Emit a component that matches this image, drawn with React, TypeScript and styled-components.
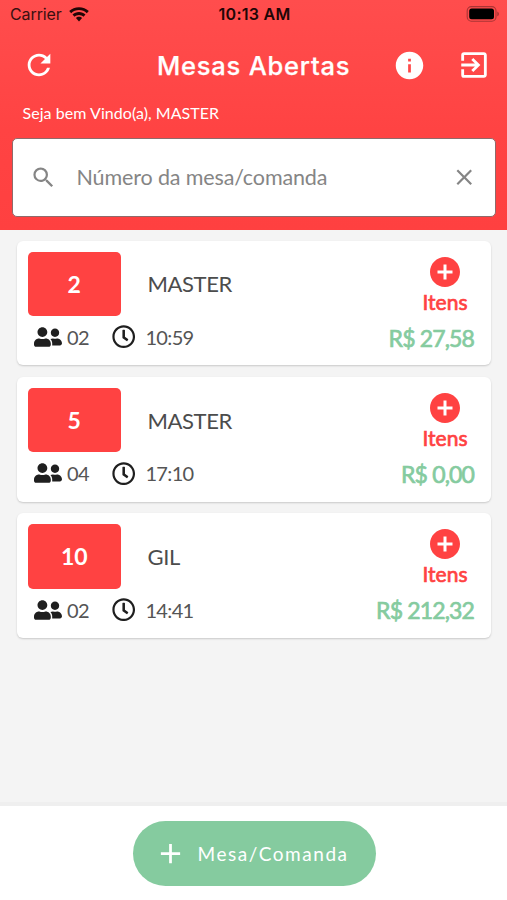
import React from "react";
import styled, { createGlobalStyle } from "styled-components";
import {
  MdRefresh,
  MdExitToApp,
  MdSearch,
  MdClose,
  MdAdd,
  MdAddCircle,
  MdInfo,
} from "react-icons/md";
import { FaUserFriends, FaRegClock } from "react-icons/fa";

const RED = "#ff4242";
const GREEN = "#85cb9f";

const GlobalStyle = createGlobalStyle`
  * { box-sizing: border-box; }
  body { margin: 0; background: #f4f4f4; }
  svg { display: block; flex: none; }
  button { border: 0; padding: 0; background: none; color: inherit; font: inherit; }
`;

const Screen = styled.div`
  width: 507px;
  height: 900px;
  display: flex;
  flex-direction: column;
  overflow: hidden;
  background: #f4f4f4;
  font-family: Lato, sans-serif;
  color: #4c4c4c;
  white-space: nowrap;
`;

const Header = styled.header`
  height: 230px;
  flex: none;
  background: linear-gradient(#ff4d4d 0, #ff4a4a 40px, #ff4343 130px, #ff4040 230px);
  color: #fff;
`;

const StatusBar = styled.div`
  height: 29px;
  padding: 0 8px 0 10px;
  display: grid;
  grid-template-columns: 1fr auto 1fr;
  align-items: center;
  font: 500 16px/29px Inter, sans-serif;
  color: #3a1010;
`;

const Carrier = styled.div`
  display: flex;
  align-items: center;
  gap: 7px;
  font-weight: 400;
  letter-spacing: -0.1px;
`;

const Clock = styled.div`
  font-weight: 600;
  letter-spacing: 0.25px;
  color: #200606;
`;

const BatterySlot = styled.div`
  justify-self: end;
  margin-top: -2px;
`;

const NavBar = styled.div`
  height: 72px;
  padding: 0 16px 0 22px;
  display: grid;
  grid-template-columns: 34px 1fr 34px 34px;
  align-items: center;
`;

const Title = styled.h1`
  margin: 1px 0 0 101px;
  font: 500 25.5px/32px Inter, sans-serif;
  letter-spacing: 0.78px;
  -webkit-text-stroke: 0.25px currentColor;
`;

const NavActions = styled.div`
  grid-column: 3 / 5;
  display: flex;
  align-items: center;
  gap: 31px;
  justify-content: flex-end;
  justify-self: end;
`;

const Welcome = styled.div`
  height: 24px;
  padding-left: 22.5px;
  font-size: 16px;
  line-height: 24px;
  letter-spacing: 0.05px;
`;

const SearchBox = styled.div`
  height: 79px;
  margin: 13px 11px 0 12px;
  padding: 0 18px 0 17px;
  display: flex;
  align-items: center;
  border: 1.5px solid #8f6a6a;
  border-radius: 5px;
  background: #fff;
  color: #858585;
`;

const Placeholder = styled.span`
  flex: 1;
  margin: -1px 0 0 19.5px;
  font-size: 21.5px;
  letter-spacing: -0.13px;
`;

const List = styled.main`
  flex: 1;
  padding: 10.5px 16px 0 17px;
  display: flex;
  flex-direction: column;
  gap: 11.5px;
`;

const Card = styled.article`
  height: 124.8px;
  flex: none;
  padding: 11px 17px 0 11px;
  border-radius: 6px;
  background: #fff;
  box-shadow: 0 1px 2px rgba(0, 0, 0, 0.18);
  display: flex;
  justify-content: space-between;
`;

const CardMain = styled.div`
  display: flex;
  flex-direction: column;
`;

const TableRow = styled.div`
  display: flex;
  align-items: center;
  gap: 27px;
`;

const TableNumber = styled.div`
  width: 92.5px;
  height: 64.5px;
  border-radius: 5px;
  background: ${RED};
  color: #fff;
  font-size: 23px;
  font-weight: 700;
  line-height: 65px;
  text-align: center;
`;

const Owner = styled.div`
  font-size: 22px;
  line-height: 30px;
  padding-top: 1px;
  letter-spacing: -0.4px;
`;

const Meta = styled.div`
  height: 42px;
  padding-left: 6px;
  display: flex;
  align-items: center;
  font-size: 20px;
  letter-spacing: -0.65px;
  color: #1f1f1f;
`;

const MetaText = styled.span<{ $width?: number }>`
  width: ${(p) => (p.$width ? `${p.$width}px` : "auto")};
  margin-left: ${(p) => (p.$width ? 5 : 10)}px;
  color: #555;
`;

const CardSide = styled.div`
  display: flex;
  flex-direction: column;
  align-items: flex-end;
`;

const AddItems = styled.button`
  margin: 2px 6.5px 0 0;
  display: flex;
  flex-direction: column;
  align-items: center;
  color: ${RED};
`;

const AddLabel = styled.span`
  margin-top: -1px;
  font-size: 21px;
  line-height: 26px;
  -webkit-text-stroke: 0.7px currentColor;
`;

const Amount = styled.div`
  margin-top: 9px;
  font-size: 23px;
  line-height: 28px;
  letter-spacing: -0.85px;
  color: ${GREEN};
  -webkit-text-stroke: 0.7px currentColor;
`;

const Footer = styled.footer`
  height: 98px;
  flex: none;
  padding-top: 15px;
  border-top: 4px solid #efefef;
  background: #fff;
  display: flex;
  justify-content: center;
  align-items: flex-start;
`;

const NewButton = styled.button`
  && {
    width: 243px;
    height: 64.5px;
    margin-left: 1px;
    padding-left: 21px;
    border-radius: 33px;
    background: ${GREEN};
    color: #fff;
    display: flex;
    align-items: center;
    gap: 11px;
    font-size: 19px;
    letter-spacing: 1.55px;
  }
`;

const WifiIcon = () => (
  <svg width="20" height="15" viewBox="0 0 20 15" fill="#200606">
    <path d="M10 .2C6.200 .2 2.700 1.700 .2 4.100L2.200 6.200C4.200 4.200 7 3.100 10 3.100s5.800 1.100 7.800 3.100l2-2.100C17.300 1.700 13.800 .2 10 .2Z" />
    <path d="M10 5C7.500 5 5.200 6 3.500 7.600l2 2.100C6.700 8.600 8.300 7.900 10 7.900s3.300.7 4.500 1.800l2-2.100C14.800 6 12.500 5 10 5Z" />
    <path d="M10 9.800c-1.200 0-2.300.5-3.100 1.300L10 14.500l3.100-3.400c-.8-.8-1.900-1.300-3.100-1.300Z" />
  </svg>
);

const BatteryIcon = () => (
  <svg width="33" height="16" viewBox="0 0 33 16">
    <rect x="1.200" y=".6" width="28.800" height="14.600" rx="4.200" fill="none" stroke="#aa3434" strokeWidth="1.100" />
    <rect x="3.200" y="2.600" width="24.800" height="10.600" rx="2.500" fill="#000" />
    <path d="M31.400 5.500c.8.400 1.400 1.300 1.400 2.400s-.6 2-1.400 2.400Z" fill="#9c3030" />
  </svg>
);

interface Table {
  number: number;
  owner: string;
  people: string;
  time: string;
  amount: string;
}

const tables: Table[] = [
  { number: 2, owner: "MASTER", people: "02", time: "10:59", amount: "R$ 27,58" },
  { number: 5, owner: "MASTER", people: "04", time: "17:10", amount: "R$ 0,00" },
  { number: 10, owner: "GIL", people: "02", time: "14:41", amount: "R$ 212,32" },
];

const TableCard = ({ table }: { table: Table }) => (
  <Card>
    <CardMain>
      <TableRow>
        <TableNumber>{table.number}</TableNumber>
        <Owner>{table.owner}</Owner>
      </TableRow>
      <Meta>
        <FaUserFriends size={28} />
        <MetaText $width={45}>{table.people}</MetaText>
        <FaRegClock size={23.4} />
        <MetaText>{table.time}</MetaText>
      </Meta>
    </CardMain>
    <CardSide>
      <AddItems>
        <MdAddCircle size={36} />
        <AddLabel>Itens</AddLabel>
      </AddItems>
      <Amount>{table.amount}</Amount>
    </CardSide>
  </Card>
);

export default function App() {
  return (
    <>
      <GlobalStyle />
      <Screen>
        <Header>
          <StatusBar>
            <Carrier>
              Carrier
              <WifiIcon />
            </Carrier>
            <Clock>10:13 AM</Clock>
            <BatterySlot>
              <BatteryIcon />
            </BatterySlot>
          </StatusBar>
          <NavBar>
            <MdRefresh size={34} />
            <Title>Mesas Abertas</Title>
            <NavActions>
              <MdInfo size={33} />
              <MdExitToApp size={34} />
            </NavActions>
          </NavBar>
          <Welcome>Seja bem Vindo(a), MASTER</Welcome>
          <SearchBox>
            <MdSearch size={27} />
            <Placeholder>Número da mesa/comanda</Placeholder>
            <MdClose size={26.5} />
          </SearchBox>
        </Header>
        <List>
          {tables.map((table) => (
            <TableCard key={table.number} table={table} />
          ))}
        </List>
        <Footer>
          <NewButton>
            <MdAdd size={33} />
            Mesa/Comanda
          </NewButton>
        </Footer>
      </Screen>
    </>
  );
}
